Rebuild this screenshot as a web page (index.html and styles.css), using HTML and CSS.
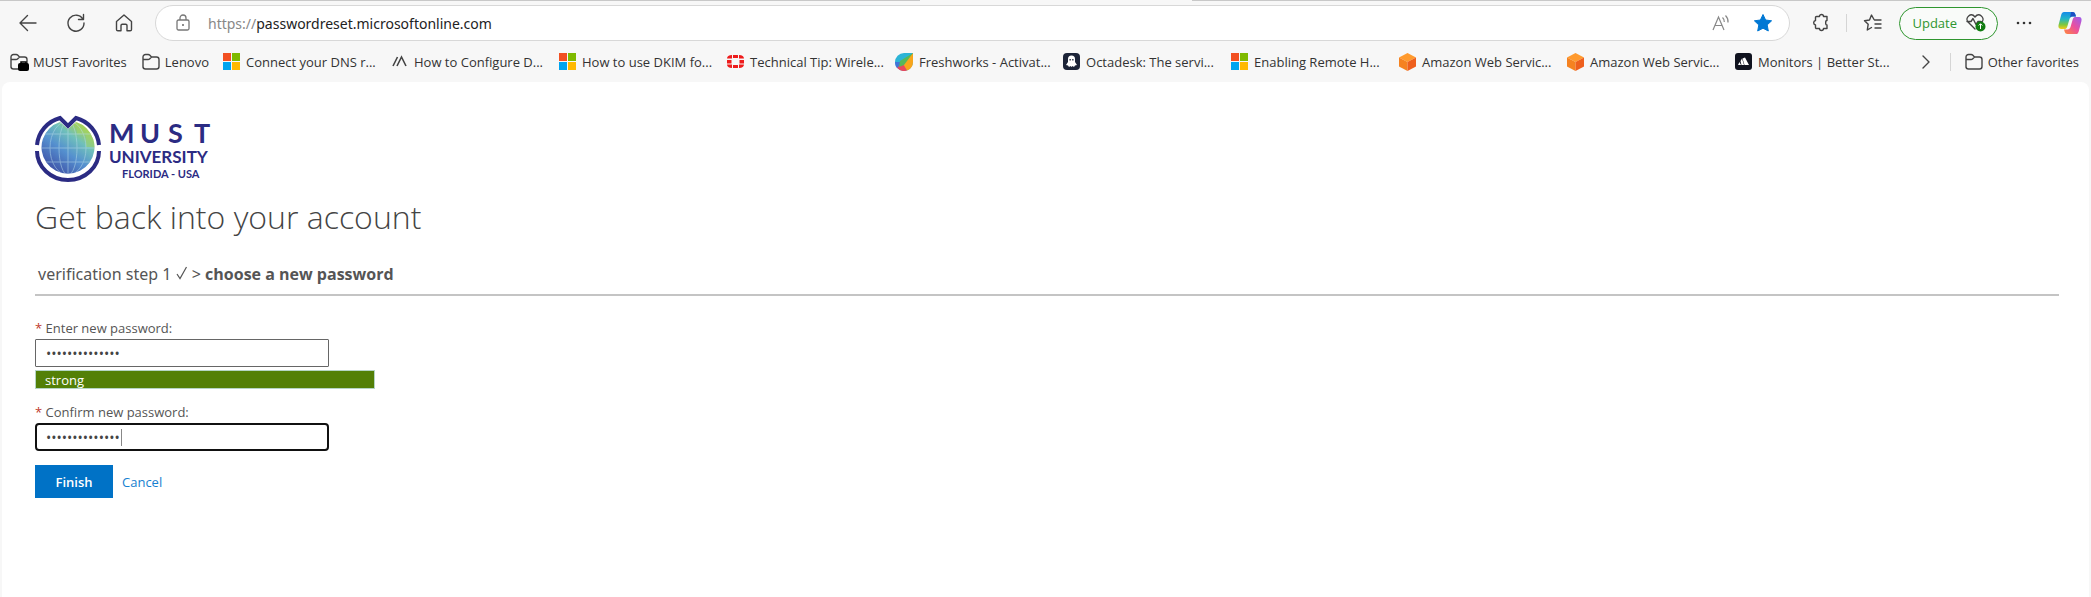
FILE: index.html
```html
<!DOCTYPE html>
<html lang="en">
<head>
<meta charset="utf-8">
<title>Get back into your account</title>
<link rel="stylesheet" href="styles.css">
</head>
<body>
<svg class="defs" aria-hidden="true">
  <symbol id="folder" viewBox="0 0 20 18"><path d="M2 14.500V4a2.500 2.500 0 0 1 2.500-2.500h2.700c.7 0 1.200.3 1.700.8L10.500 4h5A2.500 2.500 0 0 1 18 6.500v7a2.500 2.500 0 0 1-2.500 2.500h-11A2.500 2.500 0 0 1 2 13.500zM2 6.500h5c.8 0 1.300-.3 1.800-.8L10.500 4" fill="none" stroke="#444" stroke-width="1.400"/></symbol>
  <symbol id="ms" viewBox="0 0 17 17"><path fill="#f25022" d="M0 0h8v8H0z"/><path fill="#7fba00" d="M9 0h8v8H9z"/><path fill="#00a4ef" d="M0 9h8v8H0z"/><path fill="#ffb900" d="M9 9h8v8H9z"/></symbol>
  <symbol id="aws" viewBox="0 0 17 18"><path fill="#ff9a2e" d="M8.500 0 17 4.500 8.500 9 0 4.500z"/><path fill="#f58220" d="M0 4.500 8.500 9v9L0 13.500z"/><path fill="#ee5f1d" d="M17 4.500 8.500 9v9l8.500-4.500z"/></symbol>
</svg>
<header class="browser">
  <div class="tabstrip"><span class="tab-edge tab-edge-left"></span><span class="tab-edge tab-edge-right"></span></div>
  <div class="toolbar">
    <nav class="nav" aria-label="Navigation">
      <button class="icon-btn" aria-label="Back"><svg width="20" height="20" viewBox="0 0 20 20"><path d="M18 10H2M9.500 2.500 2 10l7.500 7.500" class="line"/></svg></button>
      <button class="icon-btn" aria-label="Refresh"><svg width="20" height="20" viewBox="0 0 20 20"><path d="M17 6.300A8 8 0 1 0 18 10M17.500 1.500v5h-5" class="line"/></svg></button>
      <button class="icon-btn" aria-label="Home"><svg width="20" height="20" viewBox="0 0 20 20"><path d="M2.500 8.500 10 2l7.500 6.500v8c0 .8-.5 1.300-1.300 1.300H13v-5.300c0-.8-.5-1.300-1.300-1.300H8.300c-.8 0-1.300.5-1.300 1.300v5.300H3.800c-.8 0-1.300-.5-1.300-1.300z" class="line"/></svg></button>
    </nav>
    <div class="address">
      <svg width="18" height="20" viewBox="0 0 18 20"><rect x="3" y="7" width="12" height="10" rx="1.500" class="soft"/><path d="M6 7V5a3 3 0 0 1 6 0v2" class="soft"/><circle cx="9" cy="12" r="1" fill="#666"/></svg>
      <span class="url"><span class="scheme">https://</span>passwordreset.microsoftonline.com</span>
      <button class="icon-btn read" aria-label="Read aloud"><svg width="20" height="20" viewBox="0 0 20 20"><path d="M2 17 7.500 4 13 17M4 12.500h7M11.500 4.500q2 1.800 1.800 4.500M14.500 2.500q3 3 2.500 7" fill="none" stroke="#888" stroke-width="1.200"/></svg></button>
      <button class="icon-btn" aria-label="Edit favorite"><svg width="20" height="20" viewBox="0 0 20 20"><path d="m10 1.500 2.600 5.500 6 .8-4.400 4.100 1.100 6.100L10 15.200 4.700 18l1.100-6.100L1.400 7.800l6-.8z" fill="#0078d4" stroke="#0078d4" stroke-linejoin="round"/></svg></button>
    </div>
    <div class="tools">
      <button class="icon-btn" aria-label="Extensions"><svg width="20" height="20" viewBox="0 0 20 20"><path d="M6 3.500h2.500a2 2 0 0 1 4 0H16v4a1.300 1.300 0 0 0-1.300 1.300v2A1.300 1.300 0 0 0 16 12v3.500h-3.500a2 2 0 0 1-4 0H5.500a1 1 0 0 1-1-1V12a2.300 2.300 0 0 1 0-4.500V4.500a1 1 0 0 1 1-1z" class="line"/></svg></button>
      <span class="divider"></span>
      <button class="icon-btn" aria-label="Favorites"><svg width="20" height="20" viewBox="0 0 20 20"><path d="M11 6.500 8.500 2 6.500 7l-5 .7 3.700 3.500L4.300 17l4.200-2.500M11.500 7H18M12 11h6M12 15h6" class="line"/></svg></button>
      <button class="update">Update <svg width="22" height="20" viewBox="0 0 22 20"><path d="M10 16 3 9C-.5 4.500 6-1 10 4c4-5 10.500.5 7 5M2 8.500h4l2-3 3 6 2-3h3" class="line"/><circle cx="15.500" cy="13.500" r="5" fill="#107c10"/><path d="M15.500 11v5M13.700 12.500l1.800-1.800 1.800 1.800" stroke="#fff" fill="none"/></svg></button>
      <button class="icon-btn" aria-label="More"><svg width="20" height="20" viewBox="0 0 20 20" fill="#333"><circle cx="4" cy="10" r="1.300"/><circle cx="10" cy="10" r="1.300"/><circle cx="16" cy="10" r="1.300"/></svg></button>
      <button class="icon-btn copilot" aria-label="Copilot"><svg width="24" height="24" viewBox="0 0 24 24">
        <defs><linearGradient id="cpa" x1="0" y1="0" x2="0" y2="1"><stop offset="0" stop-color="#168be8"/><stop offset=".4" stop-color="#22b6c8"/><stop offset=".75" stop-color="#82c83c"/><stop offset="1" stop-color="#f5cc18"/></linearGradient><linearGradient id="cpb" x1="1" y1="0" x2="0" y2="1"><stop offset="0" stop-color="#9a5cf0"/><stop offset=".5" stop-color="#ec4f9c"/><stop offset="1" stop-color="#ff8a3a"/></linearGradient></defs>
        <path d="M6 1h8.500c1.500 0 2.300.8 2.800 2.200l.7 2.300h-3.500c-1.700 0-2.500 1-3 2.500l-2.200 7.500c-.6 1.900-1.500 2.500-3 2.500H3C.7 18 0 16 .6 13.800L3.300 3.600C3.800 1.900 4.600 1 6 1z" fill="url(#cpa)"/>
        <path d="M13 1h1.500c1.500 0 2.300.8 2.800 2.200l.7 2.300h-3.500c-1.300 0-2 .5-2.500 1.500z" fill="#1c4fc4"/>
        <path d="M18 23H9.500c-1.500 0-2.300-.8-2.800-2.200L6 18.500h3.500c1.700 0 2.500-1 3-2.500l2.200-7.500c.6-1.900 1.500-2.500 3-2.500H21c2.300 0 3 2 2.400 4.200l-2.700 10.200c-.5 1.700-1.300 2.600-2.700 2.600z" fill="url(#cpb)"/></svg></button>
    </div>
  </div>
  <nav class="favorites" aria-label="Favorites bar">
    <a class="fav fav-auto" href="#"><svg width="20" height="18"><use href="#folder"/><rect x="9" y="10" width="11" height="8" rx="2" fill="#000"/><path d="M12 10.500V9h5v1.500" fill="none" stroke="#000" stroke-width="1.500"/></svg>MUST Favorites</a>
    <a class="fav fav-auto" href="#"><svg width="20" height="18"><use href="#folder"/></svg>Lenovo</a>
    <a class="fav" href="#"><svg width="17" height="17"><use href="#ms"/></svg>Connect your DNS r...</a>
    <a class="fav" href="#"><svg width="17" height="17" viewBox="0 0 17 17"><path d="M2 13 6.500 4M6 13l4.500-9L15 13" fill="none" stroke="#444" stroke-width="1.600"/></svg>How to Configure D...</a>
    <a class="fav" href="#"><svg width="17" height="17"><use href="#ms"/></svg>How to use DKIM fo...</a>
    <a class="fav" href="#"><svg width="17" height="17" viewBox="0 0 17 17" fill="#ee1c1c"><path d="M6 2h5v3H6zM6 12h5v3H6zM0 7h4.500v3.500H0zM12.500 7H17v3.500h-4.500zM0 5.500C.2 3.300 1.600 2 5 2v3.500zM17 5.500C16.800 3.300 15.400 2 12 2v3.500zM0 11.500c.2 2.200 1.600 3.500 5 3.500v-3.500zM17 11.500c-.2 2.200-1.600 3.500-5 3.500v-3.500z"/></svg>Technical Tip: Wirele...</a>
    <a class="fav" href="#"><svg width="18" height="18" viewBox="0 0 18 18"><path d="M9 0h9v9a9 9 0 1 1-9-9z" fill="#2cb4d6"/><path d="M18 0v9a9 9 0 0 1-6 8.500L7 12z" fill="#f8a51b"/><path d="M12 17.500C8 19 4 17.500 1.500 14L7 9z" fill="#e8495e"/><path d="M0 9a9 9 0 0 0 2 6l6-6z" fill="#4274d8"/><path d="M18 0 5 8l-1 6 5-2z" fill="#55b85a"/></svg>Freshworks - Activat...</a>
    <a class="fav" href="#"><svg width="17" height="17" viewBox="0 0 17 17"><rect width="17" height="17" rx="4" fill="#1c2438"/><path d="M5 6a3.500 3.500 0 0 1 7 0v3l2 3-2 .5-1 1.500-1.500-1-1 1-1-1L6 14l-1-1.500-2-.5 2-3z" fill="#fff"/><path d="M6.500 6h1.300v1.500H6.500zM9.200 6h1.300v1.500H9.200z" fill="#1c2438"/></svg>Octadesk: The servi...</a>
    <a class="fav" href="#"><svg width="17" height="17"><use href="#ms"/></svg>Enabling Remote H...</a>
    <a class="fav" href="#"><svg width="17" height="18"><use href="#aws"/></svg>Amazon Web Servic...</a>
    <a class="fav" href="#"><svg width="17" height="18"><use href="#aws"/></svg>Amazon Web Servic...</a>
    <a class="fav" href="#"><svg width="17" height="17" viewBox="0 0 17 17"><rect width="17" height="17" rx="3" fill="#10131f"/><path d="m3 12 1.500-3L6 12zM6.500 12 5.500 8 7 5.500 9 12zM9.500 12 7.500 5.500 10 4.500 14 12z" fill="#fff"/></svg>Monitors | Better St...</a>
    <div class="fav-end">
      <button class="icon-btn chevron" aria-label="More favorites"><svg width="12" height="14" viewBox="0 0 12 14"><path d="m3 1 6 6-6 6" class="line"/></svg></button>
      <span class="divider"></span>
      <a class="fav fav-auto" href="#"><svg width="20" height="18"><use href="#folder"/></svg>Other favorites</a>
    </div>
  </nav>
</header>
<main class="page">
  <svg class="logo" width="178" height="68" viewBox="0 0 178 68" role="img" aria-label="MUST University">
    <defs>
      <linearGradient id="globe" x1=".2" y1="1" x2=".85" y2=".1"><stop offset="0" stop-color="#3b459f"/><stop offset=".45" stop-color="#5590cf"/><stop offset=".72" stop-color="#70c0bb"/><stop offset="1" stop-color="#b8d633"/></linearGradient>
      <clipPath id="disc"><path d="M33 15 41 8A26.500 26.500 0 1 1 25 8z"/></clipPath>
    </defs>
    <g clip-path="url(#disc)">
      <circle cx="33" cy="34" r="28" fill="url(#globe)"/>
      <path d="M42 0h24v33H51V20H42z" fill="#9fd36a" opacity=".5"/>
      <g stroke="#b8dcea" opacity=".5" fill="none">
        <path d="M5 34h56M8 20h50M8 48h50M33 6v56"/>
        <ellipse cx="33" cy="34" rx="9" ry="27"/>
        <ellipse cx="33" cy="34" rx="18" ry="27"/>
      </g>
    </g>
    <path d="M2 31A31 31 0 0 1 25 4l8 8 8-8A31 31 0 0 1 64 31M2 37a31 29 0 0 0 62 0" fill="none" stroke="#2b2b83" stroke-width="4"/>
    <g class="logo-text"><text class="logo-must" y="29" x="74 105 133 159">MUST</text><text class="logo-univ" x="74" y="49">UNIVERSITY</text><text class="logo-place" x="87" y="64">FLORIDA - USA</text></g>
  </svg>
  <h1 class="title">Get back into your account</h1>
  <p class="steps">verification step 1 <svg width="12" height="14" viewBox="0 0 12 14" role="img" aria-label="done"><path d="m1 8 3 4.500L10.500 1" fill="none" stroke="#555" stroke-width="1.200"/></svg> &gt; <strong>choose a new password</strong></p>
  <form class="form">
    <label class="label" for="new"><span class="req">*</span> Enter new password:</label>
    <input class="field" id="new" type="password" value="abcdefghijklmn">
    <div class="strength">strong</div>
    <label class="label" for="confirm"><span class="req">*</span> Confirm new password:</label>
    <div class="field-wrap"><input class="field field-active" id="confirm" type="password" value="abcdefghijklmn"><span class="caret"></span></div>
    <div class="actions"><button class="finish" type="submit">Finish</button><a class="cancel" href="#">Cancel</a></div>
  </form>
</main>
</body>
</html>
```
FILE: styles.css
```css
* { box-sizing: border-box; }
body {
  margin: 0;
  min-height: 100vh;
  display: flex;
  flex-direction: column;
  background: #f7f7f7;
  font-family: "Open Sans", "Noto Sans", sans-serif;
  font-size: 13px;
  color: #333;
}
.defs { position: absolute; width: 0; height: 0; }
button { font: inherit; cursor: pointer; }
a { text-decoration: none; }
svg { flex: none; }
.line { fill: none; stroke: #444; stroke-width: 1.4; stroke-linecap: round; stroke-linejoin: round; }
.soft { fill: none; stroke: #777; stroke-width: 1.3; }

.tabstrip { display: flex; justify-content: space-between; height: 5px; }
.tab-edge { height: 1px; background: #c8c8c8; }
.tab-edge-left { width: 44%; }
.tab-edge-right { width: 43%; }

.toolbar { display: flex; align-items: center; height: 36px; padding: 0 9px 0 18px; }
.nav { display: flex; gap: 28px; margin-right: 21px; }
.icon-btn { display: flex; padding: 0; border: 0; background: none; }
.address {
  flex: 1;
  display: flex;
  align-items: center;
  height: 36px;
  padding: 0 16px 0 18px;
  border: 1px solid #d8d8d8;
  border-radius: 18px;
  background: #fff;
}
.url { flex: 1; margin-left: 16px; font-family: "Noto Sans", sans-serif; font-size: 14px; color: #222; }
.scheme { color: #888; }
.read { margin-right: 22px; }
.tools { display: flex; align-items: center; margin-left: 21px; }
.divider { width: 1px; height: 18px; background: #d5d5d5; }
.tools .divider { margin: 0 16px 0 15px; }
.update {
  display: flex;
  align-items: center;
  gap: 8px;
  height: 33px;
  margin: 0 16px;
  padding: 0 10px 0 12px;
  border: 1px solid #2f962f;
  border-radius: 17px;
  background: #f9fbf9;
  color: #2f962f;
}
.copilot { margin-left: 24px; }

.favorites { display: flex; align-items: center; height: 41px; padding: 0 12px 0 9px; }
.fav { display: flex; align-items: center; gap: 6px; width: 168px; color: #333; white-space: nowrap; }
.fav-auto { width: auto; gap: 4px; margin-right: 14px; }
.fav-end { display: flex; align-items: center; margin-left: auto; }
.fav-end .fav { margin: 0 0 0 13px; }
.chevron { margin-right: 18px; }

.page {
  flex: 1;
  margin: 0 2px;
  padding: 32px 30px 0 33px;
  border-radius: 8px 8px 0 0;
  background: #fff;
  color: #555;
}
.logo { display: block; }
.logo-text { fill: #2b2b83; font-family: Lato, sans-serif; font-weight: 700; }
.logo-must { font-size: 27px; }
.logo-univ { font-size: 17px; }
.logo-place { font-size: 11px; }
.title { margin: 10px 0 0 0; font-size: 32px; line-height: 50px; font-weight: 300; color: #444; }
.steps { margin: 20px 0 22px; padding: 0 3px 7px; border-bottom: 2px solid #c4c4c4; font-family: "Noto Sans", sans-serif; font-size: 16px; line-height: 25px; }
.steps strong { font-family: "Open Sans", sans-serif; }
.form { display: flex; flex-direction: column; align-items: flex-start; }
.label { line-height: 20px; margin-bottom: 1px; }
.req { color: #c0392b; }
.field {
  display: block;
  width: 294px;
  height: 28px;
  padding: 0 10px;
  border: 1px solid #666;
  border-radius: 1px;
  background: #fff;
  font: 14px "Open Sans", sans-serif;
  color: #444;
}
.field-wrap { position: relative; }
.field-active { padding: 0 9px; border: 2px solid #111; border-radius: 4px; outline: 0; }
.caret { position: absolute; left: 86px; top: 6px; width: 1px; height: 17px; background: #888; }
.strength { width: 340px; height: 19px; margin: 3px 0 13px; padding-left: 9px; border: 1px solid #b5d5c5; background: #538007; color: #fff; line-height: 18px; }
.actions { display: flex; align-items: center; gap: 9px; margin-top: 14px; }
.finish { width: 78px; height: 33px; border: 0; background: #0072c6; color: #fff; font-weight: 600; }
.cancel { color: #1680d0; }
```
